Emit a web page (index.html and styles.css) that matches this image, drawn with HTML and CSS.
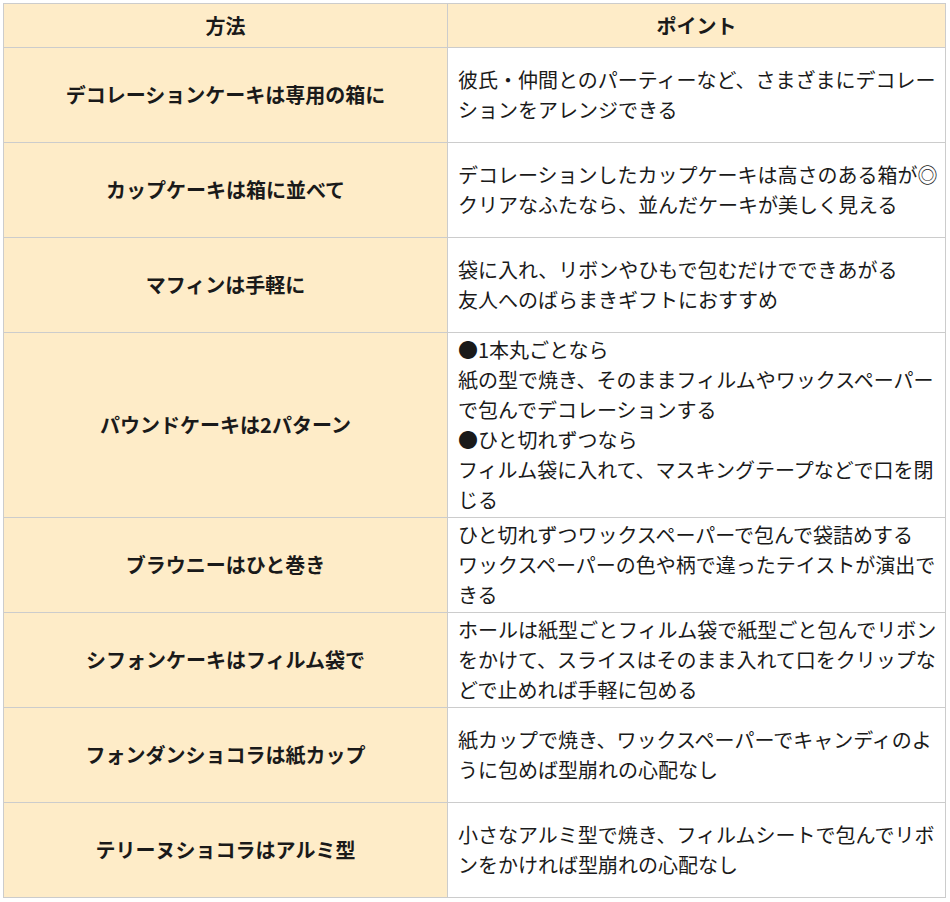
FILE: index.html
```html
<!DOCTYPE html>
<html lang="ja">
<head>
<meta charset="utf-8">
<title>ケーキのラッピング方法</title>
<link rel="stylesheet" href="styles.css">
</head>
<body>
<table class="wrap-table">
  <colgroup>
    <col class="col-method">
    <col class="col-point">
  </colgroup>
  <thead>
    <tr>
      <th class="head">方法</th>
      <th class="head">ポイント</th>
    </tr>
  </thead>
  <tbody>
    <tr>
      <th class="method">デコレーションケーキは専用の箱に</th>
      <td class="point">彼氏・仲間とのパーティーなど、さまざまにデコレーションをアレンジできる</td>
    </tr>
    <tr>
      <th class="method">カップケーキは箱に並べて</th>
      <td class="point">デコレーションしたカップケーキは高さのある箱が◎<br>クリアなふたなら、並んだケーキが美しく見える</td>
    </tr>
    <tr>
      <th class="method">マフィンは手軽に</th>
      <td class="point">袋に入れ、リボンやひもで包むだけでできあがる<br>友人へのばらまきギフトにおすすめ</td>
    </tr>
    <tr>
      <th class="method">パウンドケーキは2パターン</th>
      <td class="point">●1本丸ごとなら<br>紙の型で焼き、そのままフィルムやワックスペーパーで包んでデコレーションする<br>●ひと切れずつなら<br>フィルム袋に入れて、マスキングテープなどで口を閉じる</td>
    </tr>
    <tr>
      <th class="method">ブラウニーはひと巻き</th>
      <td class="point">ひと切れずつワックスペーパーで包んで袋詰めする<br>ワックスペーパーの色や柄で違ったテイストが演出できる</td>
    </tr>
    <tr>
      <th class="method">シフォンケーキはフィルム袋で</th>
      <td class="point">ホールは紙型ごとフィルム袋で紙型ごと包んでリボンをかけて、スライスはそのまま入れて口をクリップなどで止めれば手軽に包める</td>
    </tr>
    <tr>
      <th class="method">フォンダンショコラは紙カップ</th>
      <td class="point">紙カップで焼き、ワックスペーパーでキャンディのように包めば型崩れの心配なし</td>
    </tr>
    <tr>
      <th class="method">テリーヌショコラはアルミ型</th>
      <td class="point">小さなアルミ型で焼き、フィルムシートで包んでリボンをかければ型崩れの心配なし</td>
    </tr>
  </tbody>
</table>
</body>
</html>
```
FILE: styles.css
```css
html, body {
  margin: 0;
  padding: 0;
  background: #ffffff;
}

body {
  font-family: "Noto Sans CJK JP", "Noto Sans", sans-serif;
  color: #1a1a1a;
  font-size: 20px;
  line-height: 30px;
}

.wrap-table {
  margin: 3px 0 0 3px;
  width: 942px;
  border-collapse: collapse;
  table-layout: fixed;
}

.col-method {
  width: 444px;
}

.col-point {
  width: 498px;
}

.wrap-table th,
.wrap-table td {
  border: 1px solid #cccccc;
}

.head {
  background: #feecc8;
  font-weight: 700;
  text-align: center;
  height: 30px;
  padding: 7px 10px 6px;
  vertical-align: middle;
}

.method {
  background: #feecc8;
  font-weight: 700;
  text-align: center;
  vertical-align: middle;
  height: 90px;
  padding: 2px 10px;
}

.point {
  background: #ffffff;
  font-weight: 400;
  text-align: left;
  vertical-align: middle;
  padding: 2px 5px 2px 10px;
  line-break: strict;
}
```
